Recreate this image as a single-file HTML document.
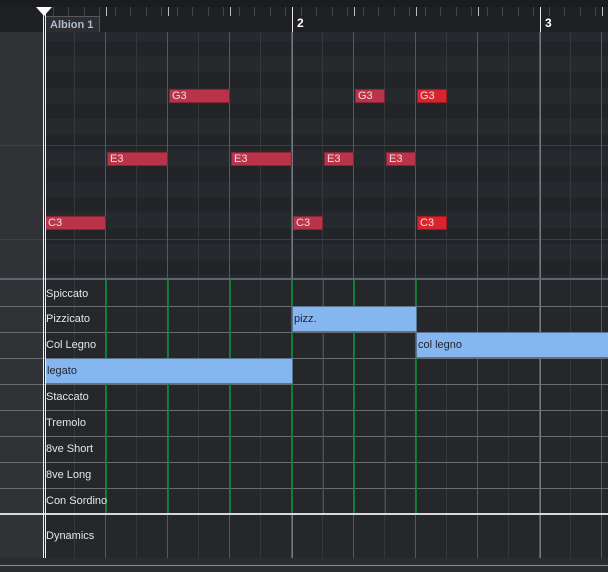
<!DOCTYPE html>
<html><head><meta charset="utf-8"><style>
*{margin:0;padding:0;box-sizing:border-box}
body{width:608px;height:572px;background:#25272b;position:relative;overflow:hidden;font-family:"Liberation Sans",sans-serif;font-size:11px}
.a{position:absolute}
.n{position:absolute;height:14px;background:#b93449;border:1px solid #8a2535;color:#f3dde0;font-size:11px;line-height:13px;padding-left:2px}
.s{background:#d9232f;border-color:#a01a22}
.lab{position:absolute;left:46px;color:#e4e6e8;font-size:11px}
.b{position:absolute;height:26px;background:#86b6f0;border:1px solid #5a7390;color:#1d2430;font-size:11px;line-height:24px;padding-left:1px}
</style></head><body>
<div class="a" style="left:0;top:0;width:608px;height:7px;background:#1b1c1f"></div>
<div class="a" style="left:0;top:7px;width:608px;height:25px;background:#1f2023"></div>
<div class="a" style="left:44px;top:7px;width:564px;height:9px;background:repeating-linear-gradient(to right,transparent 0 15px,#6a6d72 15px 16px);background-size:15.5px 9px;background-position:-6px 0"></div>
<div class="a" style="left:106px;top:7px;width:502px;height:9px;background:repeating-linear-gradient(to right,#b8bbbf 0 1px,transparent 1px 62px)"></div>
<div class="a" style="left:292px;top:7px;width:1px;height:25px;background:#e8e8e8"></div>
<div class="a" style="left:540px;top:7px;width:1px;height:25px;background:#e8e8e8"></div>
<div class="a" style="left:297px;top:16px;color:#fff;font-weight:bold;font-size:12px">2</div>
<div class="a" style="left:545px;top:16px;color:#fff;font-weight:bold;font-size:12px">3</div>
<div class="a" style="left:45px;top:16px;width:55px;height:17px;background:#2c2e32;border:1px solid #55585c;border-bottom:none;color:#aebccb;font-weight:bold;font-size:11px;line-height:16px;padding-left:4px">Albion 1</div>
<div class="a" style="left:0;top:32px;width:43px;height:526px;background:#303236"></div>
<div class="a" style="left:46px;top:32px;width:562px;height:246px;background:repeating-linear-gradient(to bottom,#222428 0 15.6px,#26292d 15.6px 31.2px);background-position:0 9px;"></div>
<div class="a" style="left:0;top:145px;width:608px;height:1px;background:#3c3f43"></div>
<div class="a" style="left:0;top:239px;width:608px;height:1px;background:#3c3f43"></div>
<div class="a" style="left:44px;top:32px;width:564px;height:526px;background:repeating-linear-gradient(to right,transparent 0 30px,#34373b 30px 31px)"></div>
<div class="a" style="left:44px;top:32px;width:564px;height:526px;background:repeating-linear-gradient(to right,transparent 0 61px,#55585c 61px 62px)"></div>
<div class="a" style="left:292px;top:32px;width:1px;height:526px;background:#75787c"></div>
<div class="a" style="left:540px;top:32px;width:1px;height:526px;background:#75787c"></div>
<div class="n" style="left:169px;top:89px;width:61px">G3</div>
<div class="n" style="left:355px;top:89px;width:30px">G3</div>
<div class="n s" style="left:417px;top:89px;width:30px">G3</div>
<div class="n" style="left:107px;top:152px;width:61px">E3</div>
<div class="n" style="left:231px;top:152px;width:61px">E3</div>
<div class="n" style="left:324px;top:152px;width:30px">E3</div>
<div class="n" style="left:386px;top:152px;width:30px">E3</div>
<div class="n" style="left:45px;top:216px;width:61px">C3</div>
<div class="n" style="left:293px;top:216px;width:30px">C3</div>
<div class="n s" style="left:417px;top:216px;width:30px">C3</div>
<div class="a" style="left:0;top:278px;width:608px;height:2px;background:#5b6570"></div>
<div class="a" style="left:0;top:306px;width:608px;height:207px;background:repeating-linear-gradient(to bottom,#6a6d70 0 1px,transparent 1px 26px)"></div>
<div class="a" style="left:106px;top:280px;width:1px;height:233px;background:#0c7a35"></div>
<div class="a" style="left:168px;top:280px;width:1px;height:233px;background:#0c7a35"></div>
<div class="a" style="left:230px;top:280px;width:1px;height:233px;background:#0c7a35"></div>
<div class="a" style="left:292px;top:280px;width:1px;height:233px;background:#0c7a35"></div>
<div class="a" style="left:323px;top:280px;width:1px;height:233px;background:#0c7a35"></div>
<div class="a" style="left:354px;top:280px;width:1px;height:233px;background:#0c7a35"></div>
<div class="a" style="left:385px;top:280px;width:1px;height:233px;background:#0c7a35"></div>
<div class="a" style="left:416px;top:280px;width:1px;height:233px;background:#0c7a35"></div>
<div class="b" style="left:292px;top:306px;width:125px">pizz.</div>
<div class="b" style="left:416px;top:332px;width:194px">col legno</div>
<div class="b" style="left:45px;top:358px;width:248px">legato</div>
<div class="lab" style="top:288px">Spiccato</div>
<div class="lab" style="top:313px">Pizzicato</div>
<div class="lab" style="top:339px">Col Legno</div>
<div class="lab" style="top:391px">Staccato</div>
<div class="lab" style="top:417px">Tremolo</div>
<div class="lab" style="top:443px">8ve Short</div>
<div class="lab" style="top:469px">8ve Long</div>
<div class="lab" style="top:495px">Con Sordino</div>
<div class="a" style="left:0;top:513px;width:608px;height:2px;background:#d8d8d8"></div>
<div class="lab" style="top:530px">Dynamics</div>
<div class="a" style="left:0;top:558px;width:608px;height:14px;background:#2a2c30"></div>
<div class="a" style="left:0;top:565px;width:608px;height:1px;background:#8a8c90"></div>
<div class="a" style="left:43px;top:7px;width:1px;height:551px;background:#f0f0f0"></div>
<div class="a" style="left:45px;top:7px;width:1px;height:551px;background:#f0f0f0"></div>
<div class="a" style="left:36px;top:7px;width:0;height:0;border-left:8px solid transparent;border-right:8px solid transparent;border-top:9px solid #fff"></div>
</body></html>
